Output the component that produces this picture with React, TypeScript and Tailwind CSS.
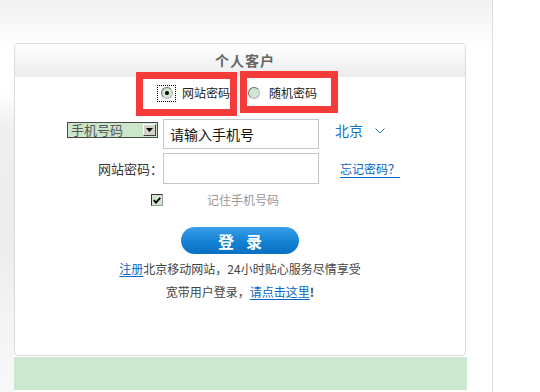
import React from "react";

const FONT = "font-['Noto_Sans_CJK_SC','Noto_Sans',sans-serif]";

function Radio({ checked }: { checked?: boolean }) {
  return (
    <div className="w-[12px] h-[12px] rounded-full border border-t-[#6f6f6f] border-l-[#6f6f6f] border-b-[#b8b8b8] border-r-[#b8b8b8] bg-[#cfe6cf] flex items-center justify-center">
      {checked && <div className="w-[4px] h-[4px] rounded-full bg-black" />}
    </div>
  );
}

export default function App() {
  return (
    <div className={`w-[540px] h-[392px] relative overflow-hidden bg-white flex ${FONT}`}>
      <div className="w-[493px] h-full border-r border-[#dedede] bg-[linear-gradient(to_bottom,#f1f1f1,#ffffff_48px)] flex">
        <div className="w-[14px] h-full bg-[linear-gradient(to_bottom,transparent_90px,#efefef_130px,#ececec_240px,#f4f4f4_320px,#f8f8f8)]" />
        <div className="flex flex-col pt-[43px]">
          <div className="w-[452px] h-[313px] border border-[#dadada] rounded-[4px] bg-white flex flex-col overflow-hidden">
            <div className="h-[33px] bg-[linear-gradient(to_bottom,#ffffff,#ebebeb)] flex items-center justify-center pl-[10px]">
              <span className="text-[14px] font-bold text-[#666] tracking-[1px]">个人客户</span>
            </div>

            <div className="mt-[6px] h-[20px] flex items-center pl-[142px]">
              <div className="w-[19px] h-[17px] border border-dotted border-black flex items-center justify-center">
                <Radio checked />
              </div>
              <span className="ml-[6px] text-[12px] leading-[20px] text-[#222]">网站密码</span>
              <div className="ml-[18px]">
                <Radio />
              </div>
              <span className="ml-[9px] text-[12px] leading-[20px] text-[#222]">随机密码</span>
            </div>

            <div className="mt-[16px] flex items-start pl-[52px]">
              <div className="mt-[3px] w-[91px] h-[16px] border border-[#4a4a4a] bg-[#cce6cc] flex items-center justify-between">
                <span className="pl-[3px] text-[13px] leading-[14px] text-[#555]">手机号码</span>
                <div className="w-[13px] h-[12px] mr-[1px] bg-[#d4d0c8] border border-t-white border-l-white border-b-[#404040] border-r-[#404040] flex items-center justify-center">
                  <svg width="7" height="4" viewBox="0 0 7 4">
                    <polygon points="0,0 7,0 3.5,4" fill="#000" />
                  </svg>
                </div>
              </div>
              <div className="ml-[5px] w-[156px] h-[30px] border border-[#c6c6c6] bg-white flex items-center pl-[6px]">
                <span className="text-[14px] text-[#111]">请输入手机号</span>
              </div>
              <span className="ml-[16px] mt-[1px] text-[14px] leading-[20px] text-[#1673bf]">北京</span>
              <svg className="ml-[12px] mt-[9px]" width="10" height="6" viewBox="0 0 10 6">
                <polyline points="0.5,0.5 5,5 9.5,0.5" fill="none" stroke="#1673bf" strokeWidth="1" />
              </svg>
            </div>

            <div className="mt-[4px] flex items-center">
              <span className="w-[148px] text-right text-[13px] leading-[31px] text-[#333]">网站密码：</span>
              <div className="w-[156px] h-[31px] border border-[#c6c6c6] bg-white" />
              <span className="ml-[21px] text-[12px] leading-[16px] text-[#0a66c2] underline underline-offset-[3px]">忘记密码？</span>
            </div>

            <div className="mt-[9px] flex items-center pl-[136px]">
              <div className="w-[12px] h-[12px] border border-t-[#333] border-l-[#333] border-b-[#999] border-r-[#999] bg-[#cfe6cf] flex items-center justify-center">
                <svg width="8" height="7" viewBox="0 0 8 7">
                  <polyline points="0.8,3.2 3,5.6 7.2,0.8" fill="none" stroke="#000" strokeWidth="1.8" />
                </svg>
              </div>
              <span className="ml-[44px] text-[12px] leading-[14px] text-[#999]">记住手机号码</span>
            </div>

            <div className="mt-[20px] ml-[166px] w-[118px] h-[27px] rounded-full bg-[linear-gradient(to_bottom,#3aa0e8,#1481d3_55%,#0a6fc0)] flex items-center justify-center gap-[12px]">
              <span className="text-[16px] font-bold text-white leading-[20px]">登</span>
              <span className="text-[16px] font-bold text-white leading-[20px]">录</span>
            </div>

            <div className="mt-[7px] text-center text-[12px] leading-[16px] text-[#444]">
              <span className="text-[#0a66c2] underline underline-offset-[2px]">注册</span>
              北京移动网站，24小时贴心服务尽情享受
            </div>
            <div className="mt-[7px] text-center text-[12px] leading-[16px] text-[#444]">
              宽带用户登录，
              <span className="text-[#0a66c2] underline underline-offset-[2px]">请点击这里</span>
              <span className="font-bold">!</span>
            </div>
          </div>
          <div className="mt-[1px] w-[453px] h-[33px] bg-[#cde8d0]" />
        </div>
      </div>
      <div className="flex-1" />

      <div className="absolute left-[136px] top-[72px] w-[101px] h-[44px] border-[7px] border-[#f43b3b]" />
      <div className="absolute left-[240px] top-[71px] w-[98px] h-[42px] border-[7px] border-[#f43b3b]" />
    </div>
  );
}
